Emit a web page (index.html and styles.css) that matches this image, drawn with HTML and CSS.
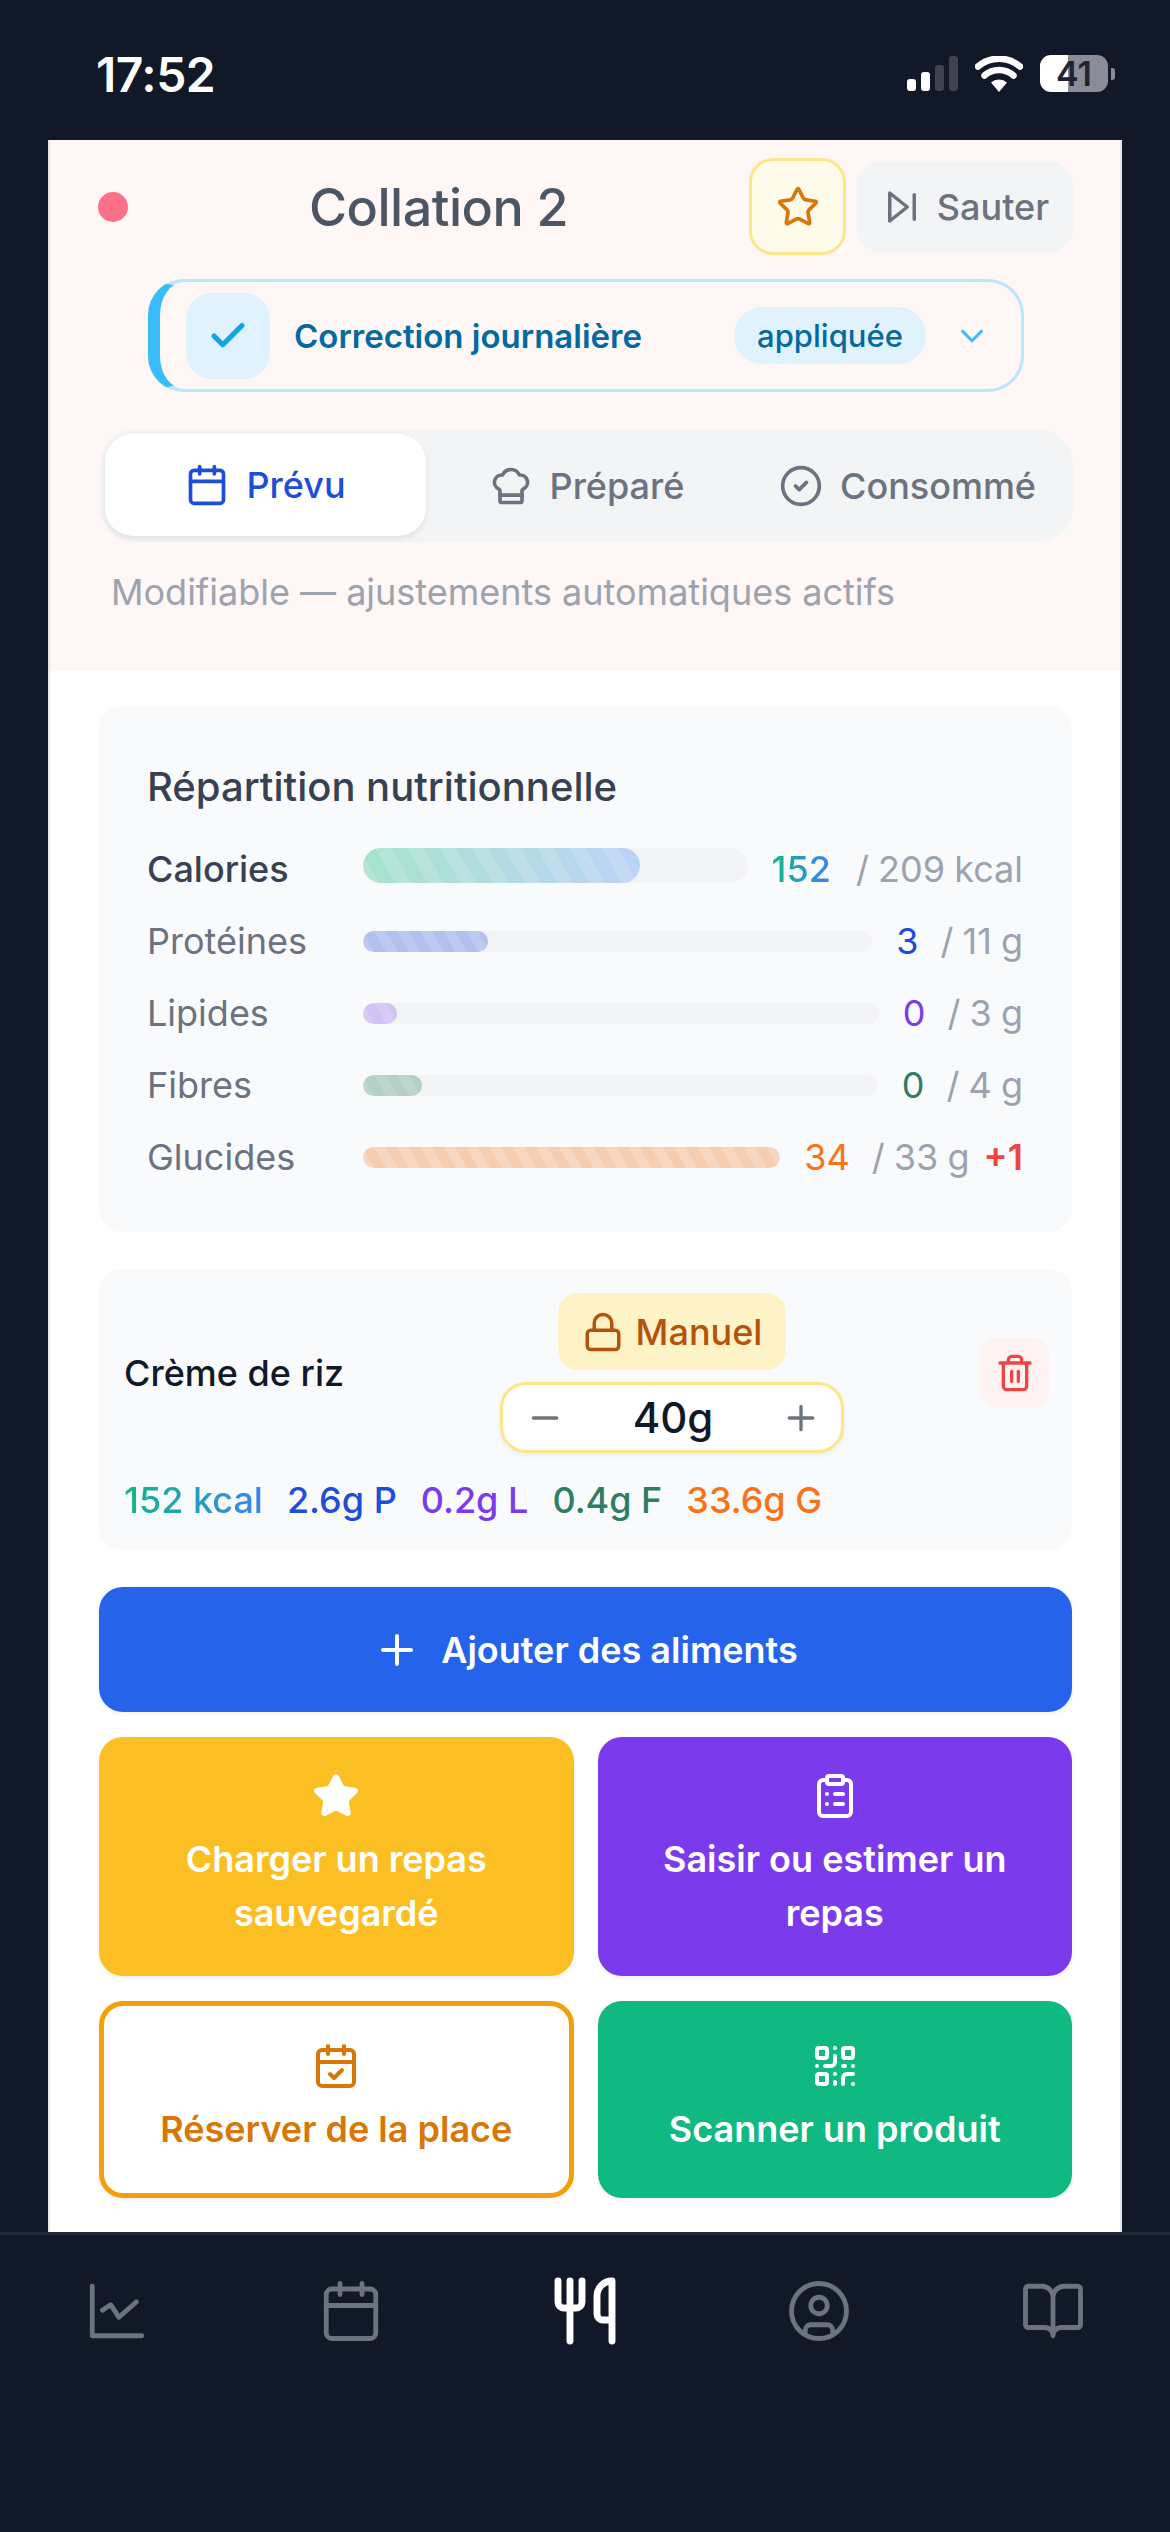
FILE: index.html
```html
<!DOCTYPE html>
<html lang="fr">
<head>
    <meta charset="UTF-8">
    <title>Collation 2</title>
    <link rel="stylesheet" href="styles.css">
</head>
<body>
<div class="screen">
    <div class="statusBar">
        <span class="time">17:52</span>
        <div class="statusIcons">
            <div class="signal">
                <span class="on s1"></span>
                <span class="on s2"></span>
                <span class="s3"></span>
                <span class="s4"></span>
            </div>
            <svg class="wifi" viewBox="0 0 48 36"><path d="M24 36l-8-9.5a12 12 0 0 1 16 0z" fill="#fff"/><path d="M9.500 19.500a22 22 0 0 1 29 0M3 10.500a32 32 0 0 1 42 0" fill="none" stroke="#fff" stroke-width="6.500" stroke-linecap="round"/></svg>
            <div class="battery"><span class="batteryNum">41</span></div>
            <span class="batteryNub"></span>
        </div>
    </div>

    <div class="card">
        <div class="mealHeader">
            <div class="titleRow">
                <span class="dot"></span>
                <h1 class="mealTitle">Collation 2</h1>
                <div class="starBtn">
                    <svg class="icon" viewBox="0 0 24 24"><path d="M11.525 2.295a.53.53 0 0 1 .95 0l2.31 4.679a2.123 2.123 0 0 0 1.595 1.16l5.166.756a.53.53 0 0 1 .294.904l-3.736 3.638a2.123 2.123 0 0 0-.611 1.878l.882 5.14a.53.53 0 0 1-.771.56l-4.618-2.428a2.122 2.122 0 0 0-1.973 0L6.396 21.01a.53.53 0 0 1-.77-.56l.881-5.139a2.122 2.122 0 0 0-.611-1.879L2.160 9.795a.53.53 0 0 1 .294-.906l5.165-.755a2.122 2.122 0 0 0 1.597-1.160z"/></svg>
                </div>
                <div class="skipBtn">
                    <svg class="icon" viewBox="0 0 24 24"><path d="M5 4l10 8-10 8z"/><path d="M19 5v14"/></svg>
                    <span>Sauter</span>
                </div>
            </div>

            <div class="correction">
                <div class="correctionIcon">
                    <svg class="icon" viewBox="0 0 24 24"><path d="M20 6L9 17l-5-5"/></svg>
                </div>
                <span class="correctionText">Correction journalière</span>
                <span class="correctionPill">appliquée</span>
                <svg class="icon chevron" viewBox="0 0 24 24"><path d="M6 9l6 6 6-6"/></svg>
            </div>

            <div class="tabs">
                <div class="tab active">
                    <svg class="icon" viewBox="0 0 24 24"><path d="M8 2v4M16 2v4M3 10h18"/><rect x="3" y="4" width="18" height="18" rx="2"/></svg>
                    <span>Prévu</span>
                </div>
                <div class="tab">
                    <svg class="icon" viewBox="0 0 24 24"><path d="M17 21a1 1 0 0 0 1-1v-5.350c0-.457.316-.844.727-1.041a4 4 0 0 0-2.134-7.589 5 5 0 0 0-9.186 0 4 4 0 0 0-2.134 7.588c.411.198.727.585.727 1.041V20a1 1 0 0 0 1 1Z"/><path d="M6 17h12"/></svg>
                    <span>Préparé</span>
                </div>
                <div class="tab">
                    <svg class="icon" viewBox="0 0 24 24"><circle cx="12" cy="12" r="10"/><path d="M9 12l2 2 4-4"/></svg>
                    <span>Consommé</span>
                </div>
            </div>

            <p class="hint">Modifiable — ajustements automatiques actifs</p>
        </div>

        <div class="mealBody">
            <div class="panel nutrition">
                <h2 class="panelTitle">Répartition nutritionnelle</h2>

                <div class="macroRow main">
                    <span class="macroLabel">Calories</span>
                    <div class="track big"><div class="fill fillCal" style="width:72%"></div></div>
                    <span class="num gradText">152</span>
                    <span class="goal">/ 209 kcal</span>
                </div>
                <div class="macroRow">
                    <span class="macroLabel">Protéines</span>
                    <div class="track"><div class="fill fillProt" style="width:24.600%"></div></div>
                    <span class="num cProt">3</span>
                    <span class="goal">/ 11 g</span>
                </div>
                <div class="macroRow">
                    <span class="macroLabel">Lipides</span>
                    <div class="track"><div class="fill fillLip" style="width:6.500%"></div></div>
                    <span class="num cLip">0</span>
                    <span class="goal">/ 3 g</span>
                </div>
                <div class="macroRow">
                    <span class="macroLabel">Fibres</span>
                    <div class="track"><div class="fill fillFib" style="width:11.500%"></div></div>
                    <span class="num cFib">0</span>
                    <span class="goal">/ 4 g</span>
                </div>
                <div class="macroRow">
                    <span class="macroLabel">Glucides</span>
                    <div class="track"><div class="fill fillGlu" style="width:100%"></div></div>
                    <span class="num cGlu">34</span>
                    <span class="goal">/ 33 g</span>
                    <span class="over">+1</span>
                </div>
            </div>

            <div class="panel foodItem">
                <div class="foodTop">
                    <span class="foodName">Crème de riz</span>
                    <div class="foodCenter">
                        <div class="manual">
                            <svg class="icon" viewBox="0 0 24 24"><rect x="3" y="11" width="18" height="11" rx="2"/><path d="M7 11V7a5 5 0 0 1 10 0v4"/></svg>
                            <span>Manuel</span>
                        </div>
                        <div class="stepper">
                            <svg class="icon" viewBox="0 0 24 24"><path d="M5 12h14"/></svg>
                            <span class="qty">40g</span>
                            <svg class="icon" viewBox="0 0 24 24"><path d="M5 12h14M12 5v14"/></svg>
                        </div>
                    </div>
                    <div class="trashBtn">
                        <svg class="icon" viewBox="0 0 24 24"><path d="M3 6h18M19 6v14c0 1-1 2-2 2H7c-1 0-2-1-2-2V6M8 6V4c0-1 1-2 2-2h4c1 0 2 1 2 2v2M10 11v6M14 11v6"/></svg>
                    </div>
                </div>
                <div class="foodMacros">
                    <span class="gradText">152 kcal</span>
                    <span class="cProt">2.6g P</span>
                    <span class="cLip">0.2g L</span>
                    <span class="cFib">0.4g F</span>
                    <span class="cGlu">33.6g G</span>
                </div>
            </div>

            <div class="addBtn">
                <svg class="icon" viewBox="0 0 24 24"><path d="M5 12h14M12 5v14"/></svg>
                <span>Ajouter des aliments</span>
            </div>

            <div class="actions">
                <div class="action tall yellow">
                    <svg class="icon solid" viewBox="0 0 24 24"><path d="M11.525 2.295a.53.53 0 0 1 .95 0l2.31 4.679a2.123 2.123 0 0 0 1.595 1.16l5.166.756a.53.53 0 0 1 .294.904l-3.736 3.638a2.123 2.123 0 0 0-.611 1.878l.882 5.14a.53.53 0 0 1-.771.56l-4.618-2.428a2.122 2.122 0 0 0-1.973 0L6.396 21.01a.53.53 0 0 1-.77-.56l.881-5.139a2.122 2.122 0 0 0-.611-1.879L2.160 9.795a.53.53 0 0 1 .294-.906l5.165-.755a2.122 2.122 0 0 0 1.597-1.160z"/></svg>
                    <span>Charger un repas<br>sauvegardé</span>
                </div>
                <div class="action tall purple">
                    <svg class="icon" viewBox="0 0 24 24"><rect x="8" y="2" width="8" height="4" rx="1"/><path d="M16 4h2a2 2 0 0 1 2 2v14a2 2 0 0 1-2 2H6a2 2 0 0 1-2-2V6a2 2 0 0 1 2-2h2M12 11h4M12 16h4M8 11h.01M8 16h.01"/></svg>
                    <span>Saisir ou estimer un<br>repas</span>
                </div>
                <div class="action outline">
                    <svg class="icon" viewBox="0 0 24 24"><path d="M8 2v4M16 2v4M3 10h18M9 16l2 2 4-4"/><rect x="3" y="4" width="18" height="18" rx="2"/></svg>
                    <span>Réserver de la place</span>
                </div>
                <div class="action green">
                    <svg class="icon" viewBox="0 0 24 24"><rect x="3" y="3" width="5" height="5" rx="1"/><rect x="16" y="3" width="5" height="5" rx="1"/><rect x="3" y="16" width="5" height="5" rx="1"/><path d="M21 16h-3a2 2 0 0 0-2 2v3M21 21v.01M12 7v3a2 2 0 0 1-2 2H7M3 12h.01M12 3h.01M12 16v.01M16 12h1M21 12v.01M12 21v-1"/></svg>
                    <span>Scanner un produit</span>
                </div>
            </div>
        </div>
    </div>

    <div class="bottomNav">
        <div class="navItem">
            <svg class="icon" viewBox="0 0 24 24"><path d="M3 3v18h18M6.700 11.700l3-2 3 4.600 6.300-5.600"/></svg>
        </div>
        <div class="navItem">
            <svg class="icon" viewBox="0 0 24 24"><path d="M8 2v4M16 2v4M3 10h18"/><rect x="3" y="4" width="18" height="18" rx="2"/></svg>
        </div>
        <div class="navItem current">
            <svg class="icon" viewBox="0 0 24 24"><path d="M3 2v7c0 1.100.9 2 2 2h4a2 2 0 0 0 2-2V2M7 2v20M21 15V2a5 5 0 0 0-5 5v6c0 1.100.9 2 2 2h3Zm0 0v7"/></svg>
        </div>
        <div class="navItem">
            <svg class="icon" viewBox="0 0 24 24"><circle cx="12" cy="12" r="10"/><circle cx="12" cy="10" r="3"/><path d="M7 20.662V19a2 2 0 0 1 2-2h6a2 2 0 0 1 2 2v1.662"/></svg>
        </div>
        <div class="navItem">
            <svg class="icon" viewBox="0 0 24 24"><path d="M12 7v14M3 18a1 1 0 0 1-1-1V4a1 1 0 0 1 1-1h5a4 4 0 0 1 4 4 4 4 0 0 1 4-4h5a1 1 0 0 1 1 1v13a1 1 0 0 1-1 1h-6a3 3 0 0 0-3 3 3 3 0 0 0-3-3z"/></svg>
        </div>
    </div>
</div>
</body>
</html>
```
FILE: styles.css
```css
*{
    padding:0;
    margin:0;
    box-sizing:border-box;
}
body{
    width:1170px;
    height:2532px;
    overflow:hidden;
    background-color:#111827;
    font-family:Inter, "Noto Sans", sans-serif;
}
.screen{
    display:flex;
    flex-direction:column;
    height:2532px;
}
.icon{
    display:block;
    fill:none;
    stroke:currentColor;
    stroke-width:2;
    stroke-linecap:round;
    stroke-linejoin:round;
    flex-shrink:0;
}

/* status bar */
.statusBar{
    height:140px;
    flex-shrink:0;
    display:flex;
    justify-content:space-between;
    padding:55px 55px 0 96px;
}
.time{
    color:#fff;
    font-size:48px;
    font-weight:600;
    line-height:40px;
    height:40px;
    letter-spacing:-0.5px;
}
.statusIcons{
    display:flex;
    align-items:center;
    height:37px;
}
.signal{
    display:flex;
    align-items:flex-end;
    gap:5px;
    height:35px;
    margin-right:17px;
}
.signal span{
    width:9px;
    border-radius:3px;
    background-color:#3d4350;
}
.signal .on{
    background-color:#fff;
}
.s1{height:12px;}
.s2{height:19px;}
.s3{height:26px;}
.s4{height:35px;}
.wifi{
    width:48px;
    height:36px;
    margin-right:17px;
}
.battery{
    width:68px;
    height:37px;
    border-radius:11px;
    background:linear-gradient(90deg,#fff 0 41%,#8a8d96 41% 100%);
    display:flex;
    align-items:center;
    justify-content:center;
}
.batteryNum{
    color:#1f2433;
    font-size:34px;
    font-weight:600;
}
.batteryNub{
    width:4px;
    height:12px;
    margin-left:3px;
    border-radius:0 3px 3px 0;
    background-color:#8a8d96;
}

/* main card */
.card{
    height:2092px;
    flex-shrink:0;
    margin:0 48px;
    background-color:#fff;
    border-left:2px solid #e5e7eb;
    border-right:2px solid #e5e7eb;
}
.mealHeader{
    height:531px;
    padding-top:18px;
    background-color:#fff6f6;
    border-bottom:2px solid #fdf8f8;
}
.titleRow{
    display:flex;
    align-items:center;
    height:97px;
    padding:0 47px 0 48px;
}
.dot{
    width:30px;
    height:30px;
    border-radius:50%;
    background-color:#fb7185;
}
.mealTitle{
    flex:1;
    text-align:center;
    color:#4b5563;
    font-size:52px;
    font-weight:500;
    letter-spacing:-0.5px;
    padding-top:2px;
}
.starBtn{
    width:97px;
    height:97px;
    display:flex;
    align-items:center;
    justify-content:center;
    background-color:#fffbeb;
    border:3px solid #fde68a;
    border-radius:24px;
    color:#d97706;
}
.starBtn .icon{
    width:44px;
    height:44px;
}
.skipBtn{
    width:216px;
    height:91px;
    margin-left:11px;
    display:flex;
    align-items:center;
    justify-content:center;
    gap:14px;
    background-color:#f3f4f6;
    border-radius:24px;
    color:#6b7280;
    font-size:36px;
    font-weight:500;
}
.skipBtn .icon{
    width:42px;
    height:42px;
}

.correction{
    display:flex;
    align-items:center;
    width:876px;
    height:113px;
    margin:24px 0 0 98px;
    padding-left:26px;
    border:3px solid #bae6fd;
    border-left:12px solid #38bdf8;
    border-radius:36px;
}
.correctionIcon{
    width:84px;
    height:86px;
    display:flex;
    align-items:center;
    justify-content:center;
    background-color:#e0f2fe;
    border-radius:26px;
    color:#0ea5e9;
}
.correctionIcon .icon{
    width:42px;
    height:42px;
    stroke-width:3;
}
.correctionText{
    margin-left:24px;
    color:#0369a1;
    font-size:33px;
    font-weight:600;
    white-space:nowrap;
}
.correctionPill{
    margin-left:92px;
    width:192px;
    height:57px;
    line-height:57px;
    text-align:center;
    background-color:#e0f2fe;
    border-radius:28px;
    color:#0369a1;
    font-size:31px;
    font-weight:500;
}
.chevron{
    width:38px;
    height:38px;
    margin-left:27px;
    color:#38bdf8;
    stroke-width:2;
}

.tabs{
    display:grid;
    grid-template-columns:repeat(3,1fr);
    width:973px;
    height:113px;
    margin:37px 0 0 50px;
    padding:5px;
    background-color:#f3f4f6;
    border-radius:36px;
}
.tab{
    display:flex;
    align-items:center;
    justify-content:center;
    gap:17px;
    color:#6b7280;
    font-size:36px;
    font-weight:500;
    border-radius:28px;
}
.tab .icon{
    width:44px;
    height:44px;
}
.tab.active{
    height:102px;
    background-color:#fff;
    box-shadow:0 3px 6px rgba(0,0,0,0.08);
    color:#1d4ed8;
}
.hint{
    margin:28px 0 0 61px;
    color:#9ca3af;
    font-size:36px;
    line-height:44px;
}

.mealBody{
    padding:35px 48px 0 49px;
}
.panel{
    background-color:#f9fafb;
    border-radius:24px;
}
.nutrition{
    height:526px;
    padding:55px 49px 0 48px;
}
.panelTitle{
    color:#374151;
    font-size:40px;
    font-weight:500;
    line-height:52px;
    margin-bottom:34px;
}
.macroRow{
    display:flex;
    align-items:center;
    height:44px;
    margin-bottom:28px;
    color:#6b7280;
    font-size:36px;
}
.macroLabel{
    width:216px;
    flex-shrink:0;
}
.main .macroLabel{
    color:#374151;
    font-weight:500;
}
.track{
    flex:1;
    height:21px;
    margin-right:24px;
    background-color:#f3f4f6;
    border-radius:11px;
    overflow:hidden;
}
.track.big{
    height:35px;
    margin-bottom:8px;
    border-radius:18px;
}
.fill{
    height:100%;
    border-radius:11px;
}
.big .fill{
    border-radius:18px;
}
.fillCal{
    background:repeating-linear-gradient(60deg,rgba(255,255,255,0.14) 0 14px,transparent 14px 28px),linear-gradient(90deg,#a7e3cc,#bcd3f7);
}
.fillProt{
    background:repeating-linear-gradient(60deg,rgba(255,255,255,0.14) 0 10px,transparent 10px 20px),#b1c0ef;
}
.fillLip{
    background:repeating-linear-gradient(60deg,rgba(255,255,255,0.14) 0 10px,transparent 10px 20px),#d3c2f8;
}
.fillFib{
    background:repeating-linear-gradient(60deg,rgba(255,255,255,0.14) 0 10px,transparent 10px 20px),#b3d1c6;
}
.fillGlu{
    background:repeating-linear-gradient(60deg,rgba(255,255,255,0.18) 0 10px,transparent 10px 20px),#f6cdb1;
}
.num{
    font-weight:400;
    margin-right:22px;
}
.main .num{
    font-weight:500;
    margin-right:25px;
}
.goal{
    color:#9ca3af;
    white-space:nowrap;
    word-spacing:-1px;
}
.over{
    margin-left:14px;
    color:#ef4444;
    font-weight:600;
}
.gradText{
    background:linear-gradient(90deg,#10b981,#3b82f6);
    -webkit-background-clip:text;
    background-clip:text;
    color:transparent;
}
.cProt{color:#1d4ed8;}
.cLip{color:#7c3aed;}
.cFib{color:#2f7d63;}
.cGlu{color:#f97316;}

/* food item */
.foodItem{
    height:281px;
    margin-top:37px;
    padding:24px 23px 0 25px;
}
.foodTop{
    display:flex;
    align-items:center;
}
.foodName{
    flex:1;
    color:#111827;
    font-size:36px;
    font-weight:500;
}
.foodCenter{
    width:344px;
    display:flex;
    flex-direction:column;
    align-items:center;
    gap:12px;
}
.manual{
    width:228px;
    height:77px;
    display:flex;
    align-items:center;
    justify-content:center;
    gap:12px;
    background-color:#fef3c7;
    border-radius:20px;
    color:#b45309;
    font-size:36px;
    font-weight:500;
}
.manual .icon{
    width:42px;
    height:42px;
}
.stepper{
    width:344px;
    height:71px;
    display:flex;
    align-items:center;
    justify-content:space-between;
    padding:0 20px 0 22px;
    background-color:#fff;
    border:3px solid #fde68a;
    border-radius:26px;
    box-shadow:0 2px 5px rgba(0,0,0,0.06);
    color:#6b7280;
}
.stepper .icon{
    width:40px;
    height:40px;
}
.qty{
    color:#111827;
    font-size:42px;
    font-weight:500;
}
.trashBtn{
    width:69px;
    height:70px;
    margin-left:136px;
    display:flex;
    align-items:center;
    justify-content:center;
    background-color:#fef2f2;
    border-radius:16px;
    color:#ef4444;
}
.trashBtn .icon{
    width:40px;
    height:40px;
}
.foodMacros{
    display:flex;
    gap:24px;
    margin-top:25px;
    font-size:36px;
    font-weight:500;
    line-height:44px;
}

/* buttons */
.addBtn{
    height:125px;
    margin-top:37px;
    display:flex;
    align-items:center;
    justify-content:center;
    gap:20px;
    background-color:#2563eb;
    border-radius:24px;
    color:#fff;
    font-size:36px;
    font-weight:600;
    box-shadow:0 2px 5px rgba(0,0,0,0.06);
}
.addBtn .icon{
    width:48px;
    height:48px;
}
.actions{
    display:grid;
    grid-template-columns:1fr 1fr;
    grid-template-rows:239px 197px;
    gap:25px 24px;
    margin-top:25px;
}
.action{
    display:flex;
    flex-direction:column;
    align-items:center;
    justify-content:center;
    gap:14px;
    border-radius:24px;
    color:#fff;
    font-size:36px;
    font-weight:600;
    line-height:54px;
    text-align:center;
    box-shadow:0 2px 5px rgba(0,0,0,0.06);
}
.action .icon{
    width:48px;
    height:48px;
    margin:-2px 0;
}
.action .solid{
    fill:#fff;
}
.yellow{background-color:#fbbf24;}
.purple{background-color:#7c3aed;}
.green{background-color:#10b981;}
.outline{
    background-color:#fff;
    border:5px solid #f59e0b;
    color:#d97706;
}

/* bottom nav */
.bottomNav{
    flex:1;
    display:grid;
    grid-template-columns:repeat(5,1fr);
    padding-top:43px;
    border-top:3px solid #1f2937;
}
.navItem{
    display:flex;
    justify-content:center;
    color:#6b7280;
}
.navItem .icon{
    width:66px;
    height:66px;
    stroke-width:1.750;
}
.navItem.current{
    color:#fff;
}
.navItem.current .icon{
    width:72px;
    height:72px;
    margin-top:-3px;
    stroke-width:2.300;
}
```
